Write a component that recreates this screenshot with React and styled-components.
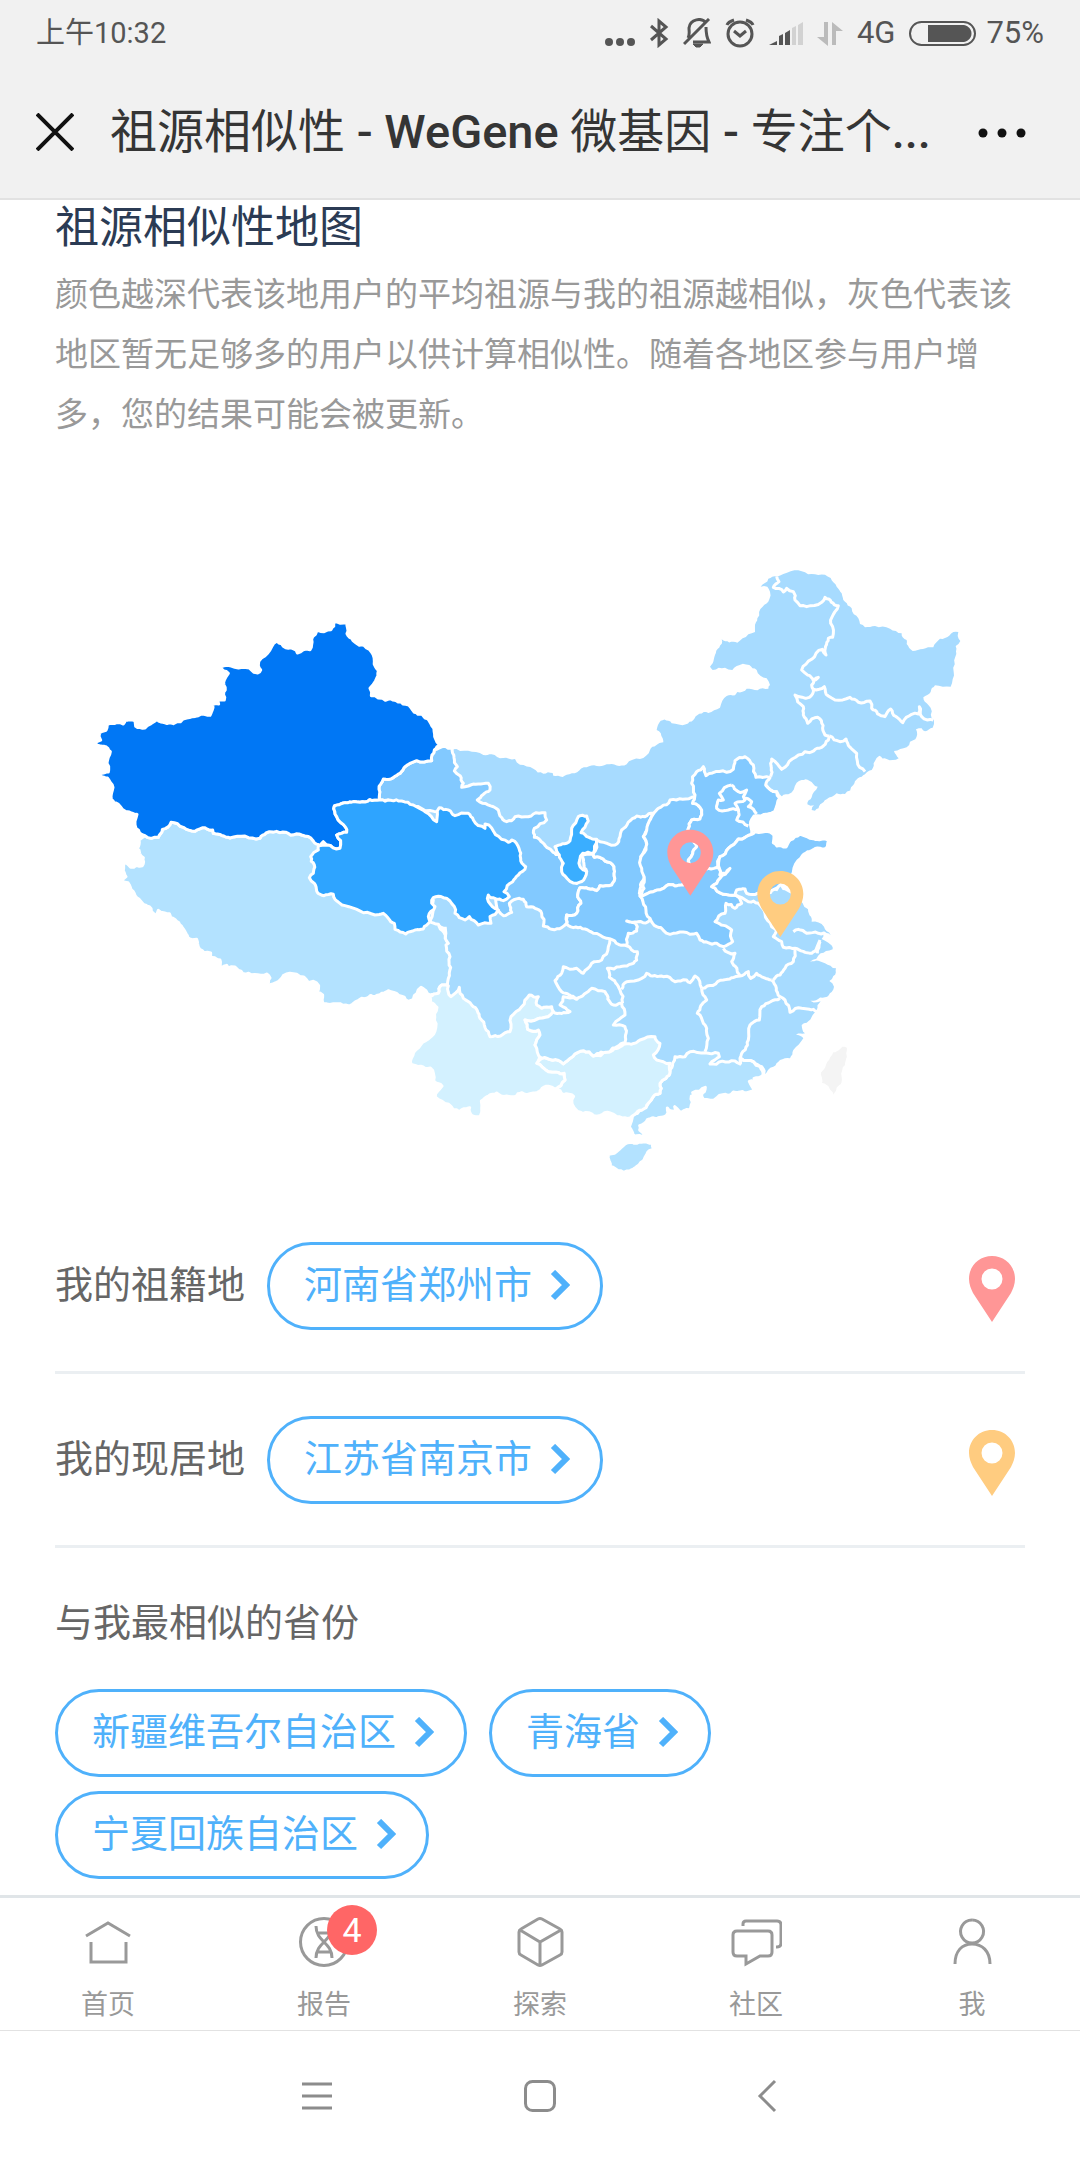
import React from 'react';
import styled, { createGlobalStyle } from 'styled-components';

const GlobalStyle = createGlobalStyle`
  * {
    box-sizing: border-box;
  }

  body {
    margin: 0;
    background: #fff;
    font-family: Roboto, "Noto Sans CJK SC", sans-serif;
    line-height: 1.2;
  }

  button {
    padding: 0;
    border: 0;
    background: none;
    font: inherit;
    color: inherit;
    cursor: pointer;
  }

  a {
    color: inherit;
    text-decoration: none;
  }

  svg {
    display: block;
    flex-shrink: 0;
  }
`;

// fills, lightest to darkest
const level = {
  none: '#f4f4f4',
  l1: '#d3f1ff',
  l2: '#b3e2ff',
  l3: '#a7dbff',
  l4: '#82c9ff',
  l5: '#3aaeff',
  l6: '#2ea4ff',
  l7: '#0077f5',
};

const mainland = '1117,568 1210,585 1235,583 1305,597 1320,614 1360,626 1390,641 1418,639 1420,647 1448,651 1460,644 1520,622 1580,613 1640,613 1680,597 1710,570 1750,547 1748,535 1730,510 1742,482 1765,482 1775,490 1818,493 1840,480 1858,461 1885,459 1920,443 1927,422 1940,408 1965,406 1972,396 2000,386 2065,386 2070,375 2060,355 2030,330 2008,315 1970,318 1957,330 1935,323 1898,330 1890,320 1898,310 1905,285 1925,238 1972,248 2005,223 2025,216 2028,187 2032,175 2048,140 2068,118 2070,95 2062,80 2042,80 2065,56 2090,50 2110,42 2155,31 2175,37 2215,45 2235,44 2252,54 2270,80 2285,100 2295,125 2315,145 2335,175 2340,192 2355,202 2385,198 2430,206 2465,220 2468,232 2480,240 2480,252 2498,273 2560,262 2568,248 2580,236 2595,234 2620,216 2635,216 2633,228 2641,243 2627,258 2626,290 2621,335 2612,380 2565,376 2552,396 2530,412 2545,435 2555,475 2562,480 2558,503 2535,514 2525,505 2508,508 2506,538 2490,545 2480,562 2442,573 2456,595 2420,597 2398,587 2385,603 2375,630 2355,643 2320,675 2295,702 2270,700 2240,718 2205,752 2195,750 2202,736 2182,733 2195,712 2213,680 2188,662 2165,660 2150,668 2125,703 2098,712 2080,752 2042,764 2020,765 2008,785 2010,802 2025,818 2068,820 2078,828 2076,850 2090,862 2120,865 2135,843 2160,827 2200,840 2242,843 2238,857 2210,860 2165,882 2150,900 2142,912 2136,935 2125,952 2095,975 2078,992 2092,994 2100,978 2108,990 2130,1000 2168,1030 2193,1070 2195,1085 2232,1100 2252,1124 2230,1120 2225,1137 2245,1148 2258,1168 2238,1173 2222,1180 2190,1205 2215,1202 2235,1210 2268,1225 2260,1248 2248,1263 2262,1280 2255,1296 2235,1312 2180,1322 2222,1324 2210,1350 2198,1365 2180,1388 2165,1395 2175,1420 2148,1424 2170,1435 2140,1470 2130,1495 2100,1500 2080,1520 2052,1545 1900,1560 1740,1540 1500,1560 1290,1500 1100,1400 1090,1260 1100,1100 1040,1080 1000,800';

const provinces = [
  { name: '西藏', fill: level.l2, points: '195,827 235,832 247,808 273,787 310,802 345,814 375,803 398,810 400,820 450,834 495,828 540,835 558,819 600,818 665,825 700,843 760,860 1060,1020 1050,1085 1075,1093 1092,1118 1105,1150 1098,1155 1110,1190 1105,1255 1102,1275 1085,1275 1075,1300 1050,1305 1023,1282 1000,1318 985,1324 925,1292 900,1304 845,1315 808,1338 770,1331 730,1331 728,1305 710,1299 716,1277 700,1264 685,1268 650,1243 610,1247 560,1280 570,1254 560,1242 488,1240 465,1221 445,1224 440,1216 424,1224 420,1200 388,1194 392,1179 372,1178 353,1152 350,1138 324,1133 312,1110 272,1073 268,1061 235,1051 223,1068 208,1040 186,1028 151,982 144,968 127,966 138,950 131,925 136,906 152,922 187,917 190,893 171,865 177,840' },
  { name: '甘肃', fill: level.l4, points: '1075,565 1117,565 1132,620 1123,633 1150,670 1145,682 1165,678 1225,670 1230,690 1192,720 1255,750 1260,768 1280,785 1295,782 1305,770 1345,770 1360,762 1395,758 1400,780 1363,805 1363,832 1400,862 1440,885 1448,935 1490,970 1520,935 1508,885 1540,880 1543,892 1575,903 1602,920 1595,975 1560,977 1550,992 1500,983 1493,1005 1503,1030 1490,1060 1460,1065 1460,1090 1445,1103 1415,1108 1390,1098 1385,1060 1340,1040 1330,1018 1318,1015 1288,1030 1295,1057 1270,1067 1250,1040 1240,900 1100,760 1000,740 899,720 897,688 910,657 940,653 975,620 1010,602 1055,602 1063,570' },
  { name: '新疆', fill: level.l7, points: '44,556 62,540 59,518 78,511 82,493 110,488 130,492 136,480 165,482 167,499 195,504 232,478 280,491 320,474 390,466 398,434 416,432 410,420 433,420 433,360 445,340 421,321 508,324 522,337 533,339 542,330 535,316 591,243 617,263 648,270 652,279 690,269 694,262 698,230 711,211 753,209 762,185 801,188 801,221 819,242 838,256 853,257 879,283 883,304 895,332 887,362 870,385 874,407 916,421 977,433 1003,457 1046,480 1056,498 1064,530 1082,557 1063,570 1055,602 1010,602 975,620 940,653 910,657 897,688 899,720 840,727 790,729 763,738 770,770 797,802 800,817 770,825 782,842 780,865 740,855 730,845 722,858 700,843 665,825 600,818 558,819 540,835 495,828 450,834 400,820 398,810 375,803 345,814 310,802 273,787 247,808 235,832 195,827 168,805 171,763 148,756 114,732 94,718 99,682 82,654 38,632 85,636 86,630 81,610 91,575 73,559' },
  { name: '青海', fill: level.l6, points: '763,738 790,729 840,727 899,720 965,723 1000,735 1070,785 1078,743 1125,767 1165,760 1180,780 1215,805 1215,792 1285,847 1295,840 1317,865 1322,895 1337,920 1315,945 1298,965 1272,995 1288,1010 1270,1022 1225,1005 1225,1025 1255,1050 1230,1070 1233,1090 1195,1095 1168,1070 1155,1080 1125,1060 1110,1023 1090,1013 1060,1013 1055,1030 1065,1040 1045,1070 1050,1085 1030,1107 1005,1110 990,1115 977,1122 945,1108 943,1090 925,1075 910,1060 885,1065 795,1037 765,1018 760,1003 732,1007 710,993 703,970 688,953 700,940 703,915 692,890 715,870 715,858 740,855 780,865 782,842 770,825 800,817 797,802 770,770' },
  { name: '陕西', fill: level.l4, points: '1550,840 1560,845 1605,855 1620,830 1625,810 1670,768 1695,770 1720,760 1705,805 1690,830 1700,860 1682,890 1693,950 1678,1000 1688,1020 1715,1070 1705,1085 1640,1083 1672,1100 1670,1113 1645,1120 1640,1157 1580,1135 1540,1120 1515,1107 1460,1093 1460,1065 1490,1060 1503,1030 1493,1005 1500,983 1550,992 1560,977 1595,975 1602,920 1575,903 1543,892 1540,880' },
  { name: '宁夏', fill: level.l5, points: '1425,860 1470,842 1475,805 1495,770 1520,768 1525,783 1503,818 1550,838 1540,880 1508,880 1500,920 1520,935 1515,952 1490,970 1455,948 1445,935 1450,910 1438,885' },
  { name: '山西', fill: level.l4, points: '1718,765 1770,720 1845,710 1838,730 1865,750 1860,777 1835,780 1825,805 1850,860 1825,900 1810,975 1760,977 1720,995 1680,1008 1693,960 1683,890 1698,860 1690,830 1705,790' },
  { name: '河北', fill: level.l4, points: '1845,705 1835,670 1850,635 1870,620 1878,647 1960,628 1965,602 1995,590 2020,615 2028,652 2070,653 2057,675 2090,695 2103,713 2084,755 2042,768 2022,768 2012,785 2013,802 2015,823 1975,837 1945,865 1920,890 1913,920 1918,940 1885,925 1825,930 1825,900 1850,860 1825,805 1835,780 1860,777 1865,750 1838,730' },
  { name: '河南', fill: level.l4, points: '1680,1008 1720,995 1760,977 1810,975 1840,940 1885,925 1918,925 1920,945 1950,925 1920,955 1895,980 1930,1003 1965,1005 1985,1030 1965,1045 1938,1030 1935,1060 1905,1085 1955,1110 1958,1145 1930,1160 1910,1150 1860,1140 1850,1120 1770,1123 1730,1100 1710,1075' },
  { name: '山东', fill: level.l4, points: '2015,823 2025,815 2070,816 2082,826 2080,848 2091,858 2118,861 2131,840 2160,822 2200,836 2248,839 2242,861 2212,864 2168,886 2154,902 2146,914 2140,937 2128,955 2100,975 2060,1000 2032,1000 2000,1000 1995,987 1970,990 1965,1005 1930,1003 1895,980 1920,955 1950,925 1920,945 1918,925 1920,890 1945,865 1975,837' },
  { name: '广东', fill: level.l2, points: '1778,1510 1785,1490 1815,1490 1830,1475 1875,1478 1915,1480 1918,1490 1890,1512 1965,1503 1980,1512 1982,1495 2020,1505 2040,1520 2049,1545 2022,1555 2034,1570 2008,1564 2022,1592 1975,1597 1960,1596 1945,1606 1928,1604 1910,1614 1870,1618 1864,1604 1876,1582 1838,1598 1862,1634 1834,1608 1832,1644 1828,1650 1800,1656 1784,1640 1790,1658 1762,1644 1764,1658 1750,1671 1702,1679 1679,1697 1679,1710 1694,1728 1662,1729 1648,1700 1658,1665 1705,1630 1740,1600 1740,1570 1770,1535' },
  { name: '广西', fill: level.l1, points: '1370,1510 1385,1495 1450,1512 1510,1472 1540,1488 1580,1475 1625,1458 1680,1440 1725,1430 1740,1450 1720,1485 1730,1500 1770,1510 1770,1535 1740,1570 1740,1600 1705,1630 1662,1665 1650,1674 1590,1659 1560,1666 1492,1654 1476,1631 1481,1609 1425,1588 1455,1560 1452,1540 1405,1535' },
  { name: '云南', fill: level.l1, points: '1050,1310 1075,1300 1085,1275 1105,1278 1113,1310 1138,1282 1150,1315 1175,1335 1200,1375 1230,1430 1290,1415 1293,1370 1325,1340 1348,1305 1375,1310 1370,1335 1385,1345 1415,1340 1420,1355 1405,1370 1335,1380 1343,1408 1375,1410 1380,1425 1365,1455 1385,1485 1370,1510 1405,1535 1452,1540 1455,1560 1425,1588 1405,1579 1360,1599 1340,1604 1325,1598 1305,1610 1280,1608 1250,1599 1204,1623 1199,1670 1176,1667 1169,1643 1138,1655 1106,1633 1066,1612 1086,1578 1061,1562 1051,1524 993,1513 1001,1477 1061,1422 1071,1342 1051,1327' },
  { name: '贵州', fill: level.l2, points: '1420,1355 1470,1355 1440,1335 1450,1310 1490,1318 1535,1285 1575,1295 1600,1335 1625,1330 1635,1365 1600,1395 1635,1400 1635,1450 1590,1475 1540,1488 1510,1472 1450,1512 1385,1495 1365,1455 1380,1425 1375,1410 1343,1408 1335,1380 1405,1370' },
  { name: '海南', fill: level.l2, points: '1586,1783 1643,1748 1670,1750 1700,1746 1720,1748 1720,1767 1688,1804 1641,1833 1591,1821' },
  { name: '台湾', fill: level.none, points: '2285,1456 2305,1461 2302,1500 2289,1568 2263,1620 2255,1600 2221,1572 2219,1535 2256,1473' },
];

// borders between provinces that share one fill
const borders = [
  '2090,50 2097,65 2080,82 2110,96 2120,85 2140,95 2145,120 2160,137 2180,140 2225,127 2235,112 2275,137 2265,155 2252,190 2258,232 2245,235 2238,285 2227,268 2165,330 2200,362 2215,352 2195,375 2200,388',
  '2200,388 2233,380 2245,408 2265,420 2310,412 2335,427 2370,423 2375,445 2415,470 2432,447 2468,488 2495,463 2515,462 2518,440 2525,470 2560,480',
  '2200,388 2188,412 2145,405 2170,440 2170,465 2183,490 2213,472 2235,525 2248,528',
  '2248,528 2280,545 2298,537 2330,580 2332,603 2355,635',
  '2248,528 2245,540 2225,562 2175,575 2105,628 2075,597 2072,650',
  '2057,675 2090,695 2100,715',
  '1955,675 1975,695 2000,690 1990,710 1995,720 1965,730 1975,748 1945,750 1910,745 1915,720 1930,720 1918,700 1955,675',
  '1990,715 2015,725 2005,740 2030,762',
  '1975,748 1970,780 2005,798',
  '1590,1137 1585,1160 1565,1200 1535,1210 1510,1240 1490,1225 1450,1220 1445,1240 1425,1262 1445,1295 1490,1315',
  '1640,1157 1672,1175 1670,1200 1620,1220 1582,1225 1588,1252 1620,1290 1628,1330',
  '1625,1288 1640,1265 1685,1255 1700,1240 1750,1250 1785,1265 1820,1260 1830,1268 1845,1248 1865,1285',
  '1930,1165 1965,1180 1955,1205 1980,1248',
  '1865,1285 1930,1260 1980,1248 2005,1235 2012,1255 2030,1240 2075,1260',
  '1865,1285 1880,1320 1852,1360 1870,1390 1885,1435 1875,1475',
  '2080,1260 2115,1225 2140,1205 2145,1170',
  '1965,1005 2005,1025 2035,1030 2055,1060 2075,1100 2090,1112 2080,1130 2105,1145 2110,1162 2145,1165 2195,1180 2220,1140',
  '2140,1115 2155,1108 2180,1120 2215,1120 2248,1125',
  '2220,1145 2212,1180',
  '2075,1260 2100,1310 2115,1320 2130,1357 2165,1345 2210,1355',
  '2100,1315 2045,1340 2038,1380 2010,1395 2005,1440 1980,1495 1982,1512',
  '1982,1495 2020,1505 2045,1520 2052,1548',
];

const hash = (x, y) => {
  const n = Math.sin(x * 12.9898 + y * 78.233) * 43758.5453;
  return (n - Math.floor(n)) * 2 - 1;
};

// Splits a segment and pushes its middle sideways. The ends are sorted first,
// so a border shared by two provinces comes out the same from both sides.
const splitSegment = (a, b, depth) => {
  const length = Math.hypot(b[0] - a[0], b[1] - a[1]);
  if (depth === 0 || length < 12) {
    return [b];
  }
  const flip = a[0] > b[0] || (a[0] === b[0] && a[1] > b[1]) ? -1 : 1;
  const mx = (a[0] + b[0]) / 2;
  const my = (a[1] + b[1]) / 2;
  const push = hash(mx, my) * Math.min(length * 0.16, 6) * flip;
  const mid = [
    mx - ((b[1] - a[1]) / length) * push,
    my + ((b[0] - a[0]) / length) * push,
  ];
  return [...splitSegment(a, mid, depth - 1), ...splitSegment(mid, b, depth - 1)];
};

const toPath = (text, closed) => {
  const points = text.split(' ').map((pair) => pair.split(',').map(Number));
  const all = closed ? [...points, points[0]] : points;
  let out = [all[0]];
  for (let i = 1; i < all.length; i++) {
    out = out.concat(splitSegment(all[i - 1], all[i], 3));
  }
  const line = out.map((p) => p.map((n) => n.toFixed(1)).join(' ')).join('L');
  return `M${line}${closed ? 'Z' : ''}`;
};

const pinPath = 'M23 0C10 0 0 10 0 23c0 5 2 10 4 14l19 29 19-29c2-4 4-9 4-14C46 10 36 0 23 0zm0 12.500a10.500 10.500 0 1 1 0 21 10.500 10.500 0 0 1 0-21z';

const Pin = ({ color }) => (
  <svg width="46" height="72" viewBox="0 -6 46 72" aria-hidden="true">
    <path d={pinPath} fill={color} fillRule="evenodd" />
  </svg>
);

const ChinaMap = () => (
  <MapDrawing viewBox="-75 -60 2910 1980" role="img" aria-label="祖源相似性地图">
    <path d={toPath(mainland, true)} fill={level.l3} />
    <g stroke="#fff" strokeWidth="9" strokeLinejoin="round">
      {provinces.map((p) => (
        <path key={p.name} d={toPath(p.points, true)} fill={p.fill} />
      ))}
      {borders.map((b) => (
        <path key={b} d={toPath(b, false)} fill="none" />
      ))}
    </g>
    <path d={pinPath} fill="#ff9696" fillRule="evenodd" transform="translate(1762 809) scale(3)" />
    <path d={pinPath} fill="#ffcc80" fillRule="evenodd" transform="translate(2032 933) scale(3)" />
  </MapDrawing>
);

const Chevron = () => (
  <svg width="20" height="32" viewBox="0 0 20 32" aria-hidden="true">
    <path d="M3 2l13 13L3 28" fill="none" stroke="currentColor" strokeWidth="6" />
  </svg>
);

const PlaceButton = ({ children }) => (
  <Pill type="button">
    {children}
    <Chevron />
  </Pill>
);

const StatusIcons = () => (
  <Status>
    <svg width="30" height="30" viewBox="0 0 30 30" fill="#555">
      <circle cx="4" cy="24" r="4" />
      <circle cx="15" cy="24" r="4" />
      <circle cx="26" cy="24" r="4" />
    </svg>
    <svg width="20" height="30" viewBox="0 0 20 30" fill="none" stroke="#555" strokeWidth="3">
      <path d="M2 8l15 13-7 6V3l7 6L2 22" />
    </svg>
    <svg width="28" height="30" viewBox="0 0 28 30" fill="none" stroke="#555" strokeWidth="3">
      <path d="M5 20c2-3 1-7 1-10 1-9 13-11 17-5M23 9c0 5 0 9 3 15H10M1 26L26 1" />
      <path d="M10 26h10l-3 3h-4z" fill="#555" strokeWidth="1" />
    </svg>
    <svg width="30" height="30" viewBox="0 0 30 30" fill="none" stroke="#555" strokeWidth="3">
      <circle cx="15" cy="16" r="12" />
      <path d="M9 13l6 5 6-5M2 7c1-3 4-4 7-5M28 7c-1-3-4-4-7-5" />
    </svg>
    <svg width="34" height="30" viewBox="0 0 34 30">
      <path d="M0 27l8-4v4zM10 18l4-2v11h-4zM16 15l5-3v15h-5z" fill="#555" />
      <path d="M23 10l4-2v19h-4zM29 7l5-3v23h-5z" fill="#d2d2d2" />
    </svg>
    <svg width="26" height="30" viewBox="0 0 26 30" fill="#bbb">
      <path d="M7 4h4v24L0 19h7zM15 27V4l11 9h-7v14z" />
    </svg>
    <span>4G</span>
    <Battery>
      <svg width="67" height="30" viewBox="0 0 67 30">
        <rect x="1" y="4" width="65" height="23" rx="11.500" fill="none" stroke="#555" strokeWidth="2" />
        <path d="M19 7h36c10 2 10 15 0 17H19z" fill="#555" />
      </svg>
      <span>75%</span>
    </Battery>
  </Status>
);

const tabs = [
  {
    label: '首页',
    icon: <path d="M4 20L26 7l22 13M9 26v20h35V26" />,
  },
  {
    label: '报告',
    badge: 4,
    icon: (
      <>
        <circle cx="26" cy="26" r="23.500" />
        <path d="M18 10c0 8 4 12 8 16s8 8 8 16M34 10c0 8-4 12-8 16s-8 8-8 16M20 17h13M20 36h13" />
      </>
    ),
  },
  {
    label: '探索',
    icon: <path d="M24 3q2-1 4 0l18 10q2 1 2 3v20q0 2-2 3L28 49q-2 1-4 0L7 39q-2-1-2-3V16q0-2 2-3zM6 14l20 12 21-12M26 26v24" />,
  },
  {
    label: '社区',
    icon: <path d="M7 15h31q4 0 4 4v17q0 4-4 4h-8l-14 8v-8H7q-4 0-4-4V19q0-4 4-4zM13 10V8q0-3 3-3h31q4 0 4 4v18q0 4-4 4h-1" />,
  },
  {
    label: '我',
    icon: <path d="M26 4a11.500 11.500 0 1 0 .1 0M9 48c0-13 7-20 17-20s18 7 18 20" />,
  },
];

const App = () => {
  return (
    <Page>
      <GlobalStyle />
      <Header>
        <StatusBar>
          <Clock>上午10:32</Clock>
          <StatusIcons />
        </StatusBar>
        <TitleBar>
          <button type="button" aria-label="关闭">
            <svg width="38" height="38" viewBox="0 0 38 38" fill="none" stroke="#111" strokeWidth="4">
              <path d="M1 1l36 36M37 1L1 37" />
            </svg>
          </button>
          <Title>祖源相似性 <b>-</b> <b>WeGene</b> 微基因 <b>-</b> 专注个<b>...</b></Title>
          <button type="button" aria-label="更多">
            <svg width="54" height="38" viewBox="0 0 54 38" fill="#111">
              <circle cx="7" cy="20" r="4.500" />
              <circle cx="26" cy="20" r="4.500" />
              <circle cx="45" cy="20" r="4.500" />
            </svg>
          </button>
        </TitleBar>
      </Header>

      <Main>
        <Heading>祖源相似性地图</Heading>
        <Intro>
          颜色越深代表该地用户的平均祖源与我的祖源越相似，灰色代表该地区暂无足够多的用户以供计算相似性。随着各地区参与用户增多，您的结果可能会被更新。
        </Intro>
        <ChinaMap />
        <PlaceRow>
          <span>我的祖籍地</span>
          <PlaceButton>河南省郑州市</PlaceButton>
          <Pin color="#ff9696" />
        </PlaceRow>
        <PlaceRow>
          <span>我的现居地</span>
          <PlaceButton>江苏省南京市</PlaceButton>
          <Pin color="#ffcc80" />
        </PlaceRow>
        <Subheading>与我最相似的省份</Subheading>
        <PillList>
          <PlaceButton>新疆维吾尔自治区</PlaceButton>
          <PlaceButton>青海省</PlaceButton>
          <PlaceButton>宁夏回族自治区</PlaceButton>
        </PillList>
      </Main>

      <TabBar>
        {tabs.map((tab) => (
          <Tab key={tab.label} href="#">
            <TabIcon>
              <svg width="52" height="52" viewBox="0 0 52 52" fill="none" stroke="#999" strokeWidth="3">
                {tab.icon}
              </svg>
              {tab.badge && <Badge>{tab.badge}</Badge>}
            </TabIcon>
            {tab.label}
          </Tab>
        ))}
      </TabBar>

      <SystemBar>
        <SystemButton type="button" aria-label="菜单">
          <svg width="40" height="40" viewBox="0 0 40 40" stroke="#8c8c8c" strokeWidth="3">
            <path d="M6 8h30M6 20h30M6 32h30" />
          </svg>
        </SystemButton>
        <SystemButton type="button" aria-label="主屏幕">
          <svg width="40" height="40" viewBox="0 0 40 40" fill="none" stroke="#8c8c8c" strokeWidth="3">
            <rect x="5.500" y="5.500" width="29" height="29" rx="7" />
          </svg>
        </SystemButton>
        <SystemButton type="button" aria-label="返回">
          <svg width="40" height="40" viewBox="0 0 40 40" fill="none" stroke="#8c8c8c" strokeWidth="3">
            <path d="M31 5L16 20l15 15" />
          </svg>
        </SystemButton>
      </SystemBar>
    </Page>
  )
};

export default App;

const Page = styled.div`
  display: flex;
  flex-direction: column;
  min-height: 100vh;
`;

const Header = styled.header`
  background: #f1f1f1;
  border-bottom: 2px solid #e2e2e2;
`;

const StatusBar = styled.div`
  display: flex;
  align-items: center;
  justify-content: space-between;
  height: 66px;
  padding: 0 36px;
  font-size: 31px;
  color: #555;
`;

const Clock = styled.span`
  font-size: 29px;
`;

const Status = styled.div`
  display: flex;
  align-items: center;
  gap: 14px;
`;

const Battery = styled.span`
  display: flex;
  align-items: center;
  gap: 10px;
`;

const TitleBar = styled.div`
  display: flex;
  align-items: center;
  gap: 36px;
  height: 132px;
  padding: 0 50px 0 36px;
`;

const Title = styled.h1`
  flex: 1;
  margin: 0;
  font-size: 47px;
  font-weight: 400;
  white-space: nowrap;
  overflow: hidden;
  color: #353535;

  b {
    font-weight: 500;
  }
`;

const Main = styled.main`
  flex: 1;
  padding: 0 55px 14px;
`;

const Heading = styled.h2`
  margin: 0;
  font-size: 44px;
  line-height: 56px;
  font-weight: 400;
  color: #2b3b54;
`;

const Intro = styled.p`
  margin: 9px 0 0;
  font-size: 33px;
  line-height: 60px;
  color: #999;
`;

const MapDrawing = styled.svg`
  width: 100%;
  margin-top: 95px;
`;

const PlaceRow = styled.div`
  display: flex;
  align-items: center;
  gap: 22px;
  padding: 42px 10px 41px 0;
  border-bottom: 3px solid #ebeff2;
  font-size: 38px;
  color: #666;

  > svg {
    margin-left: auto;
  }
`;

const Pill = styled.button`
  display: flex;
  align-items: center;
  gap: 18px;
  height: 88px;
  padding: 0 30px 0 34px;
  border: 3px solid #4fb1fb;
  border-radius: 44px;
  font-size: 38px;
  color: #4fb1fb;
`;

const Subheading = styled.h3`
  margin: 48px 0 39px;
  font-size: 38px;
  line-height: 54px;
  font-weight: 400;
  color: #666;
`;

const PillList = styled.div`
  display: flex;
  flex-wrap: wrap;
  gap: 14px 22px;
`;

const TabBar = styled.nav`
  display: flex;
  border-top: 3px solid #e0e5e8;
  border-bottom: 1px solid #e2e2e2;
`;

const Tab = styled.a`
  flex: 1;
  display: flex;
  flex-direction: column;
  align-items: center;
  gap: 18px;
  padding: 18px 0 6px;
  font-size: 27px;
  line-height: 38px;
  color: #999;
`;

const TabIcon = styled.span`
  position: relative;
`;

const Badge = styled.span`
  position: absolute;
  top: -11px;
  left: 29px;
  width: 50px;
  height: 50px;
  border-radius: 25px;
  background: #ff6666;
  font-size: 34px;
  line-height: 50px;
  text-align: center;
  color: #fff;
`;

const SystemBar = styled.footer`
  display: flex;
  align-items: center;
  justify-content: center;
  gap: 184px;
  height: 129px;
`;

const SystemButton = styled.button`
  width: 40px;
  height: 40px;
`;
